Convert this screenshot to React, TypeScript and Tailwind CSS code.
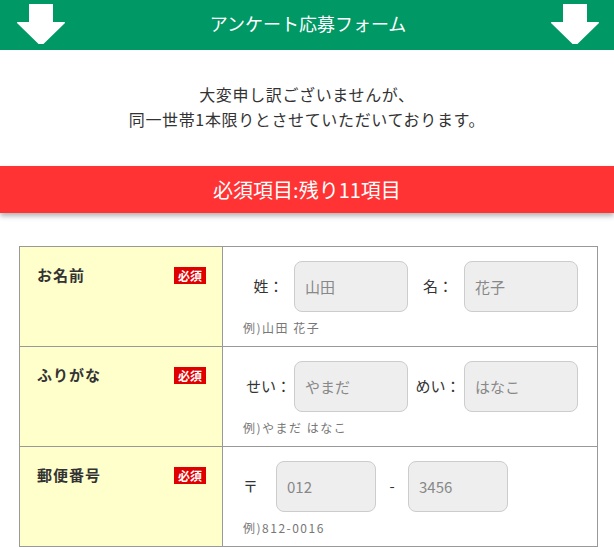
import React from "react";

function Arrow() {
  return (
    <svg width="50" height="40" viewBox="0 0 50 40" className="mt-[4px] shrink-0">
      <path
        d="M13 0 H37 V18 H48 Q50 18 48.5 19.6 L26.4 41 Q25 42.2 23.6 41 L1.5 19.6 Q0 18 2 18 H13 Z"
        fill="#ffffff"
      />
    </svg>
  );
}

function Badge() {
  return (
    <span className="mt-[2px] flex h-[17px] w-[32px] items-center justify-center bg-[#e00000] text-[12px] font-bold leading-none text-white">
      必須
    </span>
  );
}

function Field({ ph, w }: { ph: string; w: string }) {
  return (
    <input
      readOnly
      placeholder={ph}
      className={`${w} h-[51px] rounded-[8px] border border-[#cccccc] bg-[#eeeeee] px-[10px] text-[15px] text-[#333] placeholder:text-[#888888] outline-none`}
    />
  );
}

function Row({
  label,
  children,
  example,
}: {
  label: string;
  children: React.ReactNode;
  example: string;
}) {
  return (
    <div className="grid grid-cols-[203px_1fr] border-b border-[#999999]">
      <div className="flex items-start justify-between border-r border-[#999999] bg-[#ffffcc] pl-[17px] pr-[16px] pt-[18px]">
        <span className="text-[15px] font-bold leading-[20px] tracking-[1px] text-[#333333]">{label}</span>
        <Badge />
      </div>
      <div className="pl-[20px] pt-[14px] pb-[9px]">
        <div className="flex items-center text-[15px] text-[#333333]">{children}</div>
        <p className="mt-[7px] text-[12px] leading-[18px] tracking-[1.5px] text-[#777777]">{example}</p>
      </div>
    </div>
  );
}

export default function App() {
  return (
    <div className="h-[547px] overflow-hidden bg-white font-['Noto_Sans_CJK_JP',sans-serif]">
      <header className="flex h-[50px] items-start justify-between bg-[#009864] pl-[16px] pr-[14px]">
        <Arrow />
        <h1 className="mt-[11px] text-[18px] font-normal leading-[24px] text-white">アンケート応募フォーム</h1>
        <Arrow />
      </header>

      <div className="pt-[32px] pb-[34px] text-center text-[16px] leading-[25px] tracking-[0.04em] text-[#333333]">
        <p>大変申し訳ございませんが、</p>
        <p>同一世帯1本限りとさせていただいております。</p>
      </div>

      <div className="flex h-[47px] items-center justify-center bg-[#ff3333] text-[20px] font-normal text-white shadow-[0_3px_5px_rgba(0,0,0,0.3)]">
        必須項目:残り11項目
      </div>

      <div className="ml-[19px] mt-[33px] w-[579px] border-x border-t border-[#999999]">
        <Row label="お名前" example="例)山田 花子">
          <span className="w-[51px] text-center">姓：</span>
          <Field ph="山田" w="w-[114px]" />
          <span className="ml-[4px] w-[52px] text-center">名：</span>
          <Field ph="花子" w="w-[114px]" />
        </Row>
        <Row label="ふりがな" example="例)やまだ はなこ">
          <span className="w-[51px] text-center">せい：</span>
          <Field ph="やまだ" w="w-[114px]" />
          <span className="ml-[4px] w-[52px] text-center">めい：</span>
          <Field ph="はなこ" w="w-[114px]" />
        </Row>
        <Row label="郵便番号" example="例)812-0016">
          <span className="w-[33px]">〒</span>
          <Field ph="012" w="w-[100px]" />
          <span className="w-[32px] text-center">-</span>
          <Field ph="3456" w="w-[100px]" />
        </Row>
        <div className="grid h-[20px] grid-cols-[203px_1fr]">
          <div className="border-r border-[#999999] bg-[#ffffcc]" />
          <div />
        </div>
      </div>
    </div>
  );
}
